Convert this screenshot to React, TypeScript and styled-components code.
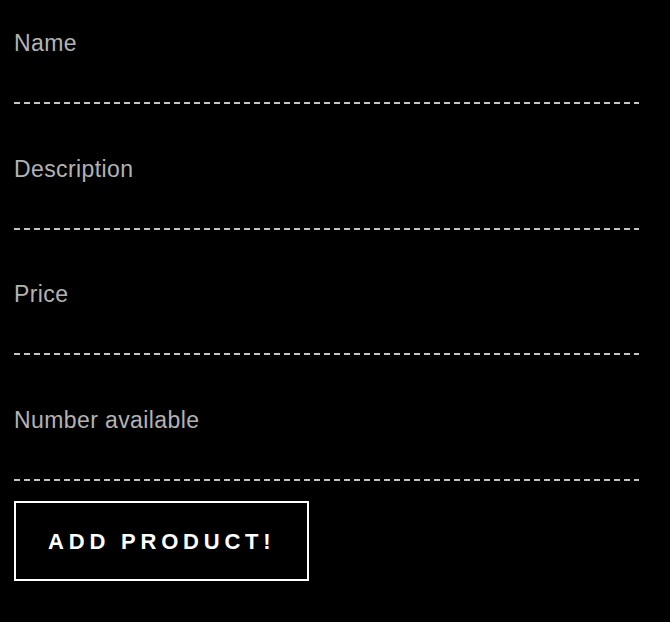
import React from "react";
import styled, { createGlobalStyle } from "styled-components";

const GlobalStyle = createGlobalStyle`
  html, body {
    margin: 0;
    padding: 0;
    background: #000;
  }
  body {
    font-family: "Liberation Sans", Arial, sans-serif;
  }
`;

const fields = ["Name", "Description", "Price", "Number available"];

const App: React.FC = () => {
  return (
    <>
      <GlobalStyle />
      <Form onSubmit={(e) => e.preventDefault()}>
        {fields.map((name) => (
          <Field key={name}>
            <Label htmlFor={name}>{name}</Label>
            <Input id={name} type="text" />
          </Field>
        ))}
        <SubmitButton type="submit">Add product!</SubmitButton>
      </Form>
    </>
  );
};

const Form = styled.form`
  display: flex;
  flex-direction: column;
  align-items: flex-start;
  width: 625px;
  padding: 30px 0 0 14px;
`;

const Field = styled.div`
  display: flex;
  flex-direction: column;
  width: 100%;
  margin-bottom: 51.5px;

  &:nth-last-of-type(1) {
    margin-bottom: 20px;
  }
`;

const Label = styled.label`
  font-size: 23px;
  line-height: 26px;
  letter-spacing: 0.4px;
  color: #b3b3b3;
`;

// dashed underline: 6px dash, 4px gap, 2px thick
const Input = styled.input`
  box-sizing: border-box;
  width: 100%;
  height: 48px;
  padding: 0;
  border: none;
  background: linear-gradient(to right, #c4c4c4 60%, transparent 60%) left
    bottom / 10px 2px repeat-x;
  color: #ddd;
  font-family: inherit;
  font-size: 20px;
  outline: none;
`;

const SubmitButton = styled.button`
  background: #000;
  border: 2px solid #fff;
  color: #fff;
  font-family: "Liberation Sans", Arial, sans-serif;
  font-weight: bold;
  font-size: 22px;
  line-height: 25px;
  letter-spacing: 4.8px;
  text-transform: uppercase;
  padding: 26px 32px 25px 32px;
  cursor: pointer;
`;

export default App;
